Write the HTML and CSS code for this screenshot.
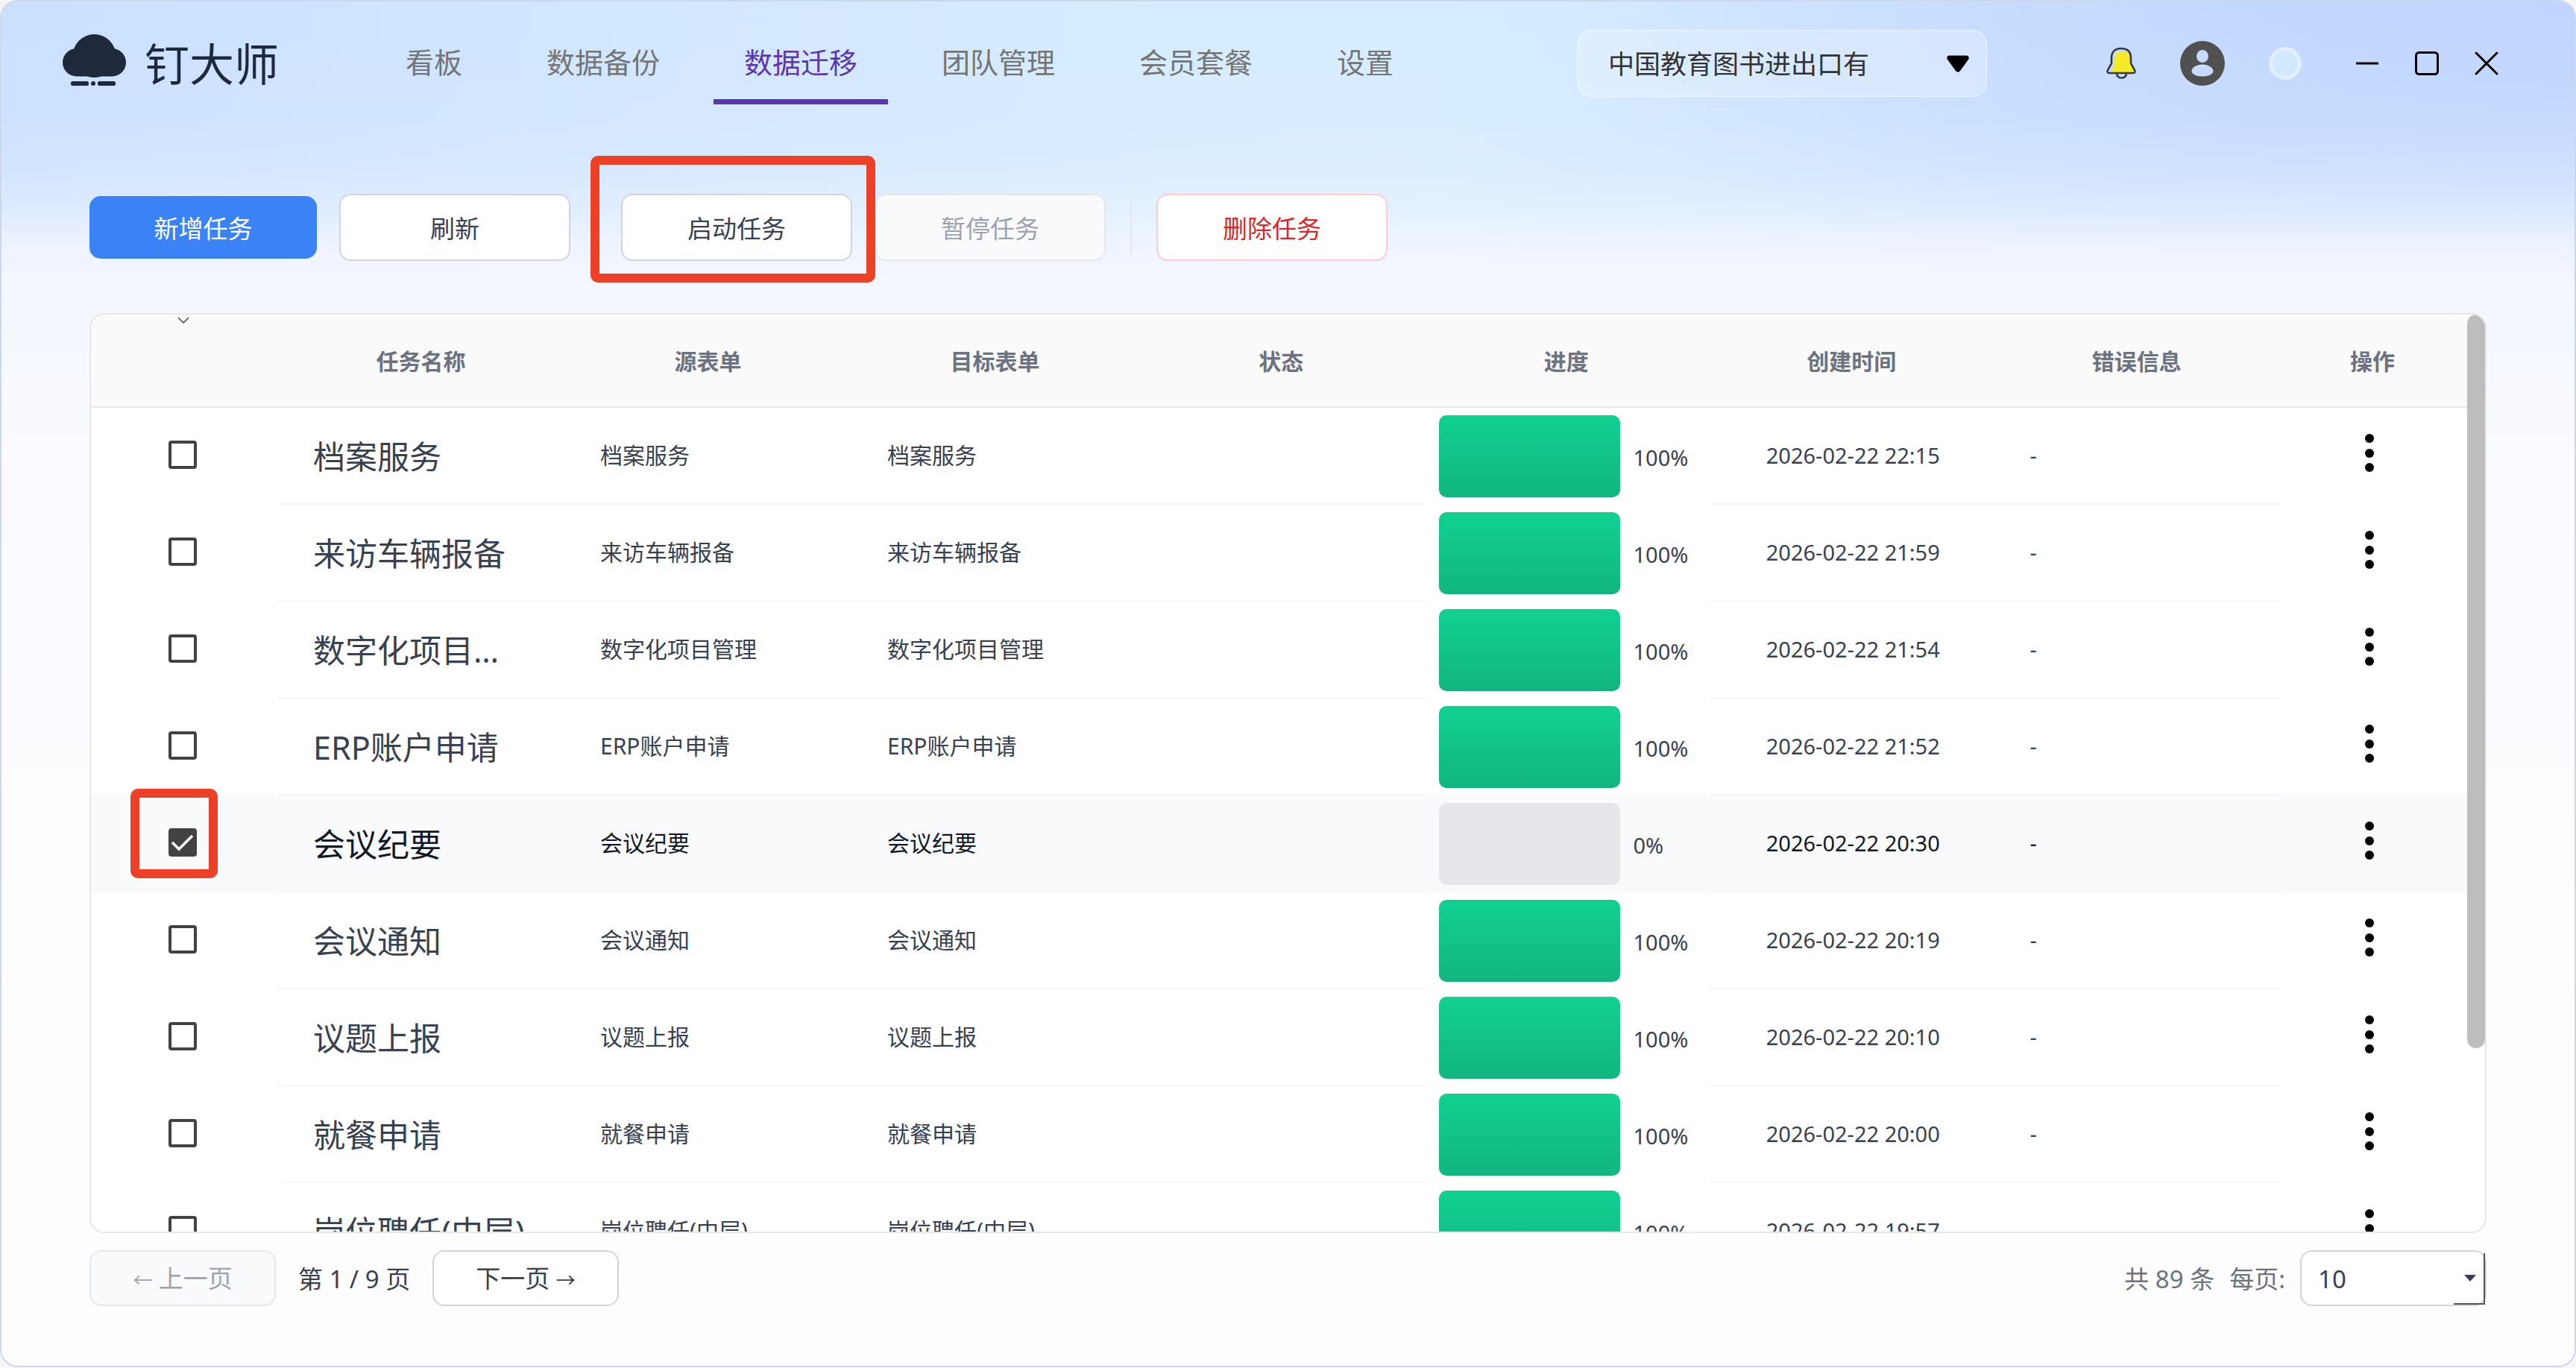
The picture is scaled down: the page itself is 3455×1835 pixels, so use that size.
FILE: index.html
```html
<!DOCTYPE html>
<html lang="zh-CN">
<head>
<meta charset="utf-8">
<title>钉大师</title>
<link rel="stylesheet" href="styles.css">
</head>
<body>
<svg width="0" height="0" class="sprite" aria-hidden="true">
  <symbol id="dots" viewBox="0 0 14 54"><circle cx="7" cy="7" r="6"/><circle cx="7" cy="27" r="6"/><circle cx="7" cy="46" r="6"/></symbol>
</svg>
<div class="window">
  <header class="header">
    <div class="brand">
      <svg class="brand-icon" viewBox="0 0 86 70" aria-hidden="true">
        <circle cx="42.5" cy="29" r="29"/>
        <rect x="0" y="19" width="85" height="37.5" rx="18.7"/>
        <rect x="11" y="63" width="24" height="6" rx="2.5"/>
        <circle cx="41" cy="66" r="3"/>
        <rect x="47" y="63" width="24" height="6" rx="2.5"/>
      </svg>
      <span class="brand-name">钉大师</span>
    </div>
    <nav class="nav">
      <a class="tab" href="#">看板</a>
      <a class="tab" href="#">数据备份</a>
      <a class="tab tab-active" href="#">数据迁移</a>
      <a class="tab" href="#">团队管理</a>
      <a class="tab" href="#">会员套餐</a>
      <a class="tab" href="#">设置</a>
    </nav>
    <div class="company">
      <select class="company-select" aria-label="组织">
        <option>中国教育图书进出口有</option>
      </select>
      <svg class="company-arrow" viewBox="0 0 30 23" aria-hidden="true"><path d="M3 0.5H27Q30 1 29.6 5L18 21Q15 24.500 12 21L0.400 5Q0 1 3 0.500Z"/></svg>
    </div>
    <div class="user-tools">
      <button class="icon-btn bell" aria-label="通知">
        <svg viewBox="0 0 40 44" aria-hidden="true">
          <path d="M6 34L11 24V17C11 9 15 6 22 6C28 6 32 8 33 14V22L38 34Z" fill="#f5ea28"/>
          <path d="M7 15C7 6 12 2 20 2S33 6 33 15V22L38 31Q39.500 35 36 35H4Q0.500 35 2 31L7 22Z" fill="none" stroke="#343840" stroke-width="2.600"/>
          <path d="M14 35.500Q14.500 41.500 20.500 41.500T27 35.500" fill="none" stroke="#343840" stroke-width="2.600"/>
        </svg>
      </button>
      <button class="icon-btn avatar" aria-label="用户">
        <svg viewBox="0 0 60 60" aria-hidden="true">
          <path fill="#505050" fill-rule="evenodd" d="M30 0A30 30 0 1 1 30 60A30 30 0 1 1 30 0ZM30 12A8 8.500 0 1 0 30 29A8 8.500 0 1 0 30 12ZM30 31.500C20 31.500 15.500 37 15.500 40.500C15.500 44 21 47.500 30 47.500S44.500 44 44.500 40.500C44.500 37 40 31.500 30 31.500Z"/>
        </svg>
      </button>
      <button class="theme-dot" aria-label="主题"></button>
    </div>
    <div class="win-tools">
      <button class="icon-btn" aria-label="最小化"><svg viewBox="0 0 40 40"><path d="M5 20H35"/></svg></button>
      <button class="icon-btn" aria-label="最大化"><svg viewBox="0 0 40 40"><rect x="5.500" y="5.500" width="29" height="29" rx="4"/></svg></button>
      <button class="icon-btn" aria-label="关闭"><svg viewBox="0 0 40 40"><path d="M6 6L34 34M34 6L6 34" stroke-linecap="round"/></svg></button>
    </div>
  </header>

  <main class="main">
    <div class="toolbar">
      <button class="btn btn-primary">新增任务</button>
      <button class="btn">刷新</button>
      <span class="divider"></span>
      <div class="marked">
        <button class="btn">启动任务</button>
        <span class="mark mark-button"></span>
      </div>
      <button class="btn" disabled>暂停任务</button>
      <span class="divider"></span>
      <button class="btn btn-danger">删除任务</button>
    </div>

    <section class="panel">
      <div class="panel-body">
        <table class="tasks">
          <colgroup><col class="col-pick"><col class="col-form"><col class="col-form"><col class="col-form"><col><col><col><col><col class="col-ops"></colgroup>
          <thead>
            <tr>
              <th class="th-sort"><svg viewBox="0 0 16 9" aria-label="排序"><path d="M1 1L8 8L15 1"/></svg></th>
              <th>任务名称</th><th>源表单</th><th>目标表单</th><th>状态</th><th>进度</th><th>创建时间</th><th>错误信息</th><th>操作</th>
            </tr>
          </thead>
          <tbody>
            <tr>
              <td class="pick"><input type="checkbox" aria-label="档案服务"></td>
              <td class="name">档案服务</td><td>档案服务</td><td>档案服务</td><td></td>
              <td class="progress"><div class="meter"><div class="bar"><div class="fill" style="width:100%"></div></div><span>100%</span></div></td>
              <td class="num time">2026-02-22 22:15</td><td class="num">-</td>
              <td class="ops"><button class="more" aria-label="更多"><svg><use href="#dots"/></svg></button></td>
            </tr>
            <tr>
              <td class="pick"><input type="checkbox" aria-label="来访车辆报备"></td>
              <td class="name">来访车辆报备</td><td>来访车辆报备</td><td>来访车辆报备</td><td></td>
              <td class="progress"><div class="meter"><div class="bar"><div class="fill" style="width:100%"></div></div><span>100%</span></div></td>
              <td class="num time">2026-02-22 21:59</td><td class="num">-</td>
              <td class="ops"><button class="more" aria-label="更多"><svg><use href="#dots"/></svg></button></td>
            </tr>
            <tr>
              <td class="pick"><input type="checkbox" aria-label="数字化项目管理"></td>
              <td class="name">数字化项目管理</td><td>数字化项目管理</td><td>数字化项目管理</td><td></td>
              <td class="progress"><div class="meter"><div class="bar"><div class="fill" style="width:100%"></div></div><span>100%</span></div></td>
              <td class="num time">2026-02-22 21:54</td><td class="num">-</td>
              <td class="ops"><button class="more" aria-label="更多"><svg><use href="#dots"/></svg></button></td>
            </tr>
            <tr>
              <td class="pick"><input type="checkbox" aria-label="ERP账户申请"></td>
              <td class="name">ERP账户申请</td><td>ERP账户申请</td><td>ERP账户申请</td><td></td>
              <td class="progress"><div class="meter"><div class="bar"><div class="fill" style="width:100%"></div></div><span>100%</span></div></td>
              <td class="num time">2026-02-22 21:52</td><td class="num">-</td>
              <td class="ops"><button class="more" aria-label="更多"><svg><use href="#dots"/></svg></button></td>
            </tr>
            <tr class="selected">
              <td class="pick"><input type="checkbox" aria-label="会议纪要" checked><span class="mark mark-check"></span></td>
              <td class="name">会议纪要</td><td>会议纪要</td><td>会议纪要</td><td></td>
              <td class="progress"><div class="meter"><div class="bar"><div class="fill" style="width:0%"></div></div><span>0%</span></div></td>
              <td class="num time">2026-02-22 20:30</td><td class="num">-</td>
              <td class="ops"><button class="more" aria-label="更多"><svg><use href="#dots"/></svg></button></td>
            </tr>
            <tr>
              <td class="pick"><input type="checkbox" aria-label="会议通知"></td>
              <td class="name">会议通知</td><td>会议通知</td><td>会议通知</td><td></td>
              <td class="progress"><div class="meter"><div class="bar"><div class="fill" style="width:100%"></div></div><span>100%</span></div></td>
              <td class="num time">2026-02-22 20:19</td><td class="num">-</td>
              <td class="ops"><button class="more" aria-label="更多"><svg><use href="#dots"/></svg></button></td>
            </tr>
            <tr>
              <td class="pick"><input type="checkbox" aria-label="议题上报"></td>
              <td class="name">议题上报</td><td>议题上报</td><td>议题上报</td><td></td>
              <td class="progress"><div class="meter"><div class="bar"><div class="fill" style="width:100%"></div></div><span>100%</span></div></td>
              <td class="num time">2026-02-22 20:10</td><td class="num">-</td>
              <td class="ops"><button class="more" aria-label="更多"><svg><use href="#dots"/></svg></button></td>
            </tr>
            <tr>
              <td class="pick"><input type="checkbox" aria-label="就餐申请"></td>
              <td class="name">就餐申请</td><td>就餐申请</td><td>就餐申请</td><td></td>
              <td class="progress"><div class="meter"><div class="bar"><div class="fill" style="width:100%"></div></div><span>100%</span></div></td>
              <td class="num time">2026-02-22 20:00</td><td class="num">-</td>
              <td class="ops"><button class="more" aria-label="更多"><svg><use href="#dots"/></svg></button></td>
            </tr>
            <tr>
              <td class="pick"><input type="checkbox" aria-label="岗位聘任(中层)"></td>
              <td class="name">岗位聘任(中层)</td><td>岗位聘任(中层)</td><td>岗位聘任(中层)</td><td></td>
              <td class="progress"><div class="meter"><div class="bar"><div class="fill" style="width:100%"></div></div><span>100%</span></div></td>
              <td class="num time">2026-02-22 19:57</td><td class="num">-</td>
              <td class="ops"><button class="more" aria-label="更多"><svg><use href="#dots"/></svg></button></td>
            </tr>
          </tbody>
        </table>
      </div>
      <div class="scrollbar"><div class="thumb"></div></div>
    </section>

    <footer class="pager">
      <button class="page-btn" disabled><span class="arrow">←</span> 上一页</button>
      <span class="page-now">第 1 / 9 页</span>
      <button class="page-btn">下一页 <span class="arrow">→</span></button>
      <span class="total">共 89 条</span>
      <label class="per-label" for="per-page">每页:</label>
      <div class="per-page">
        <select id="per-page" class="per-select"><option>10</option></select>
      </div>
    </footer>
  </main>
</div>
</body>
</html>
```
FILE: styles.css
```css
* { box-sizing: border-box; }

body {
  margin: 0;
  background: #f6f6f6;
  color: #374151;
  font-family: "Noto Sans", "Noto Sans CJK SC", sans-serif;
  font-size: 30px;
  line-height: 44px;
}

button, select, input { font: inherit; color: inherit; margin: 0; }
button { padding: 0; border: 0; background: none; }
.sprite { position: absolute; }

.window {
  display: flex;
  flex-direction: column;
  height: calc(100vh - 1px);
  border: 2px solid #ccd8ea;
  border-radius: 24px;
  overflow: hidden;
  background:
    linear-gradient(180deg, rgba(243, 246, 255, 0) 0, rgba(243, 246, 255, 0.05) 160px, rgba(243, 246, 255, 0.2) 230px, rgba(243, 246, 255, 0.5) 285px, rgba(243, 246, 255, 0.85) 325px, #f3f6ff 365px, #f9fbff 600px, #fdfdfe 1400px, #fdfdfd 100%),
    radial-gradient(ellipse 1400px 450px at 100% 0, #bfd4ff 0, rgba(191, 212, 255, 0) 100%),
    linear-gradient(90deg, #cbe0ff 0, #d0e5ff 18%, #d6ecff 45%, #d6edff 56%, #cde3ff 80%, #cde2ff 100%);
}

/* Title bar */
.header {
  display: flex;
  align-items: center;
  flex: none;
  height: 166px;
  padding: 0 98px 0 82px;
}
.brand { display: flex; align-items: center; gap: 24px; width: 419px; }
.brand-icon { width: 86px; height: 70px; margin-bottom: 8px; fill: #1e293b; }
.brand-name { padding-top: 2px; font-size: 60px; line-height: 80px; color: #1e293b; }

.nav { display: flex; gap: 31px; }
.tab {
  position: relative;
  padding: 0 41px 4px;
  font-size: 38px;
  line-height: 106px;
  color: #757575;
  text-decoration: none;
}
.tab-active { color: #5e35b1; }
.tab-active::after {
  content: "";
  position: absolute;
  left: 0;
  right: 0;
  bottom: 0;
  height: 7px;
  background: #5e35b1;
}

.company {
  position: relative;
  width: 550px;
  height: 90px;
  margin-left: auto;
  border: 2px solid rgba(255, 255, 255, 0.35);
  border-radius: 20px;
  background: rgba(255, 255, 255, 0.22);
}
.company-select {
  appearance: none;
  width: 100%;
  height: 100%;
  padding: 2px 100px 0 40px;
  border: 0;
  background: none;
  color: #333;
  font-size: 35px;
}
.company-arrow { position: absolute; right: 22px; top: 32px; width: 30px; height: 23px; pointer-events: none; }

.user-tools { display: flex; align-items: center; gap: 59px; margin-left: 160px; }
.win-tools { display: flex; gap: 40px; margin-left: 68px; }
.icon-btn { width: 40px; height: 40px; }
.icon-btn svg { display: block; width: 100%; height: 100%; }
.win-tools svg { fill: none; stroke: #000; stroke-width: 3; }
.bell { height: 44px; }
.avatar { width: 60px; height: 60px; }
.theme-dot { width: 44px; height: 44px; border: 5px solid #e3eeff; border-radius: 50%; background: #d2e9ff; }

/* Task actions */
.main { display: flex; flex-direction: column; flex: 1; min-height: 0; padding: 92px 118px 80px 118px; }
.toolbar { display: flex; align-items: center; gap: 30px; margin-bottom: 70px; }
.btn {
  width: 310px;
  height: 90px;
  padding-top: 3px;
  border: 2px solid #d1d5db;
  border-radius: 15px;
  background: #fff;
  font-size: 33px;
}
.btn-primary { width: 305px; height: 84px; border: 0; background: #3b82f6; color: #fff; }
.btn-danger { border-color: #fecaca; color: #dc2626; }
.btn:disabled, .page-btn:disabled { border-color: #e5e7eb; background: #f9fafb; color: #9ca3af; }
.divider { width: 2px; height: 72px; margin: 0 3px; background: #e5e7eb; }

.marked { position: relative; display: flex; }
.mark { position: absolute; border: 12px solid #ec4027; border-radius: 10px; pointer-events: none; }
.mark-button { inset: -51px -31px -29px -41px; }
.mark-check { left: 53px; top: -9px; width: 117px; height: 120px; }

/* Task table */
.panel {
  display: flex;
  flex: 1;
  min-height: 0;
  border: 2px solid #e5e7eb;
  border-radius: 20px;
  overflow: hidden;
  background: #fff;
}
.panel-body { flex: 1; min-width: 0; overflow: hidden; border-top-right-radius: 20px; }
.scrollbar { width: 24px; }
.thumb { height: 80%; border-radius: 12px; background: #bdbdbd; }

.tasks { width: 100%; table-layout: fixed; border-collapse: separate; border-spacing: 0; }
.col-pick { width: 252px; }
.col-form { width: 385px; }
.col-ops { width: 250px; }
.tasks th {
  height: 125px;
  padding: 3px 4px 0 0;
  border-bottom: 2px solid #e5e7eb;
  background: #fafafa;
  color: #6b7280;
  font-weight: 700;
}
.tasks .th-sort { padding-top: 1px; vertical-align: top; line-height: 0; }
.th-sort svg { width: 16px; height: 9px; fill: none; stroke: #444; stroke-width: 1.5; }

.tasks td {
  height: 130px;
  padding: 0 46px;
  border-bottom: 2px solid #f3f4f6;
  overflow: hidden;
  white-space: nowrap;
  text-overflow: ellipsis;
}
.tasks .name { padding: 3px 50px 0 46px; font-size: 43px; line-height: 60px; }
.tasks .num { font-size: 29px; }
.tasks .time { text-align: center; }
.selected td { background: #f9fafb; color: #111827; }

.tasks .pick { position: relative; overflow: visible; padding: 0 6px 4px 0; border: 0; text-align: center; }
.pick input {
  appearance: none;
  display: block;
  width: 38px;
  height: 38px;
  margin: 0 auto;
  border: 4px solid #424242;
  border-radius: 4px;
}
.pick input:checked {
  background: #424242 url("data:image/svg+xml,%3Csvg xmlns='http://www.w3.org/2000/svg' viewBox='0 0 30 30'%3E%3Cpath d='M1 15L10 24L28 6' fill='none' stroke='white' stroke-width='3.500'/%3E%3C/svg%3E") center / 30px no-repeat;
}

.tasks .progress { padding: 0 18px; border: 0; }
.meter { display: flex; align-items: center; gap: 18px; height: 110px; font-size: 29px; color: #374151; }
.meter span { padding-top: 4px; }
.bar { width: 243px; height: 110px; border-radius: 10px; background: #e5e7eb; overflow: hidden; }
.fill { height: 100%; background: linear-gradient(#11d092, #12b580); }

.tasks .ops { padding: 0 12px 8px 0; border: 0; text-align: center; }
.more { display: block; width: 14px; height: 54px; margin: 0 auto; }
.more svg { display: block; width: 14px; height: 54px; }

/* Pagination */
.pager { display: flex; align-items: center; margin-top: 23px; font-size: 33px; }
.page-btn {
  width: 250px;
  height: 75px;
  padding-top: 3px;
  border: 2px solid #d1d5db;
  border-radius: 16px;
  background: #fff;
}
.arrow { font-size: 26px; }
.page-now { width: 210px; padding-top: 3px; text-align: center; }
.total { margin-left: auto; padding-top: 3px; color: #6b7280; }
.per-label { margin: 0 20px; padding-top: 3px; color: #6b7280; }
.per-page {
  position: relative;
  width: 250px;
  height: 75px;
  border: 2px solid #d1d5db;
  border-radius: 16px;
  background: #fff;
}
.per-page::before {
  content: "";
  position: absolute;
  right: 12px;
  top: 31px;
  border: 8px solid transparent;
  border-top: 9px solid #374151;
  border-bottom: 0;
}
.per-page::after {
  content: "";
  position: absolute;
  right: 0;
  top: 2px;
  bottom: 0;
  width: 40px;
  border-right: 2px solid #555;
  border-bottom: 2px solid #555;
}
.per-select { appearance: none; width: 100%; height: 100%; padding: 3px 22px 0; border: 0; background: none; }
```
